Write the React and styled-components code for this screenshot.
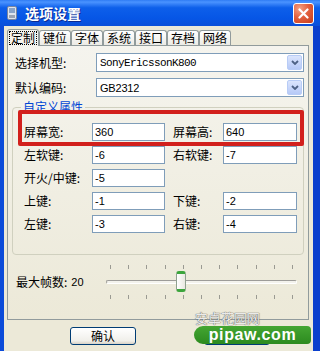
import React from "react";
import styled, { createGlobalStyle } from "styled-components";

const GlobalStyle = createGlobalStyle`
  html, body {
    margin: 0;
    padding: 0;
    background: #ece9d8;
  }
  body {
    font-family: "Noto Sans CJK SC", "Noto Sans", sans-serif;
    font-size: 12px;
    color: #000;
  }
  * {
    box-sizing: border-box;
  }
`;

const Window = styled.div`
  position: relative;
  width: 320px;
  height: 351px;
  display: flex;
  flex-direction: column;
  overflow: hidden;
  background: #ece9d8;
`;

const TitleBar = styled.div`
  flex: none;
  height: 26px;
  display: flex;
  align-items: center;
  gap: 8px;
  padding: 0 6px 0 7px;
  background: linear-gradient(180deg, #2f7cf4 0%, #4a93ff 8%, #0d5fea 30%, #0656e6 70%, #0a4fd9 100%);
`;

const Title = styled.span`
  flex: 1;
  color: #fff;
  font-size: 14px;
  font-weight: bold;
  line-height: 16px;
  text-shadow: 1px 1px 0 #0c2a8f;
`;

const CloseButton = styled.div`
  width: 21px;
  height: 21px;
  border: 1px solid #fff;
  border-radius: 3px;
  background: radial-gradient(circle at 30% 25%, #f3a084 0%, #e2603e 45%, #c63c1b 100%);
  display: flex;
  align-items: center;
  justify-content: center;
`;

const Frame = styled.div`
  flex: 1;
  display: flex;
  flex-direction: column;
  padding: 3px 4px 0 3px;
  border-left: 4px solid #0b4bd9;
  border-right: 7px solid #0a3fcd;
  background: #ece9d8;
`;

const TabRow = styled.div`
  position: relative;
  z-index: 1;
  height: 16px;
  display: flex;
  align-items: flex-end;
`;

const Tab = styled.div`
  width: 32px;
  height: ${(p) => (p.$active ? 17 : 15)}px;
  margin-bottom: ${(p) => (p.$active ? -1 : 0)}px;
  display: flex;
  align-items: center;
  justify-content: center;
  border: 1px solid #919b9c;
  border-bottom: none;
  border-radius: 3px 3px 0 0;
  background: ${(p) => (p.$active ? "#f5f4ee" : "linear-gradient(#ffffff, #ecebe5)")};
  font-size: 12px;
  line-height: 12px;
`;

const Focus = styled.span`
  outline: 1px dotted #000;
  outline-offset: 0;
  padding: 0 1px;
`;

const TabPage = styled.div`
  height: 275px;
  display: flex;
  flex-direction: column;
  padding: 7px 4px 0 4px;
  border: 1px solid #919b9c;
  background: linear-gradient(180deg, #f5f4ee, #ece9d8);
`;

const FieldRow = styled.div`
  height: 19px;
  display: flex;
  align-items: center;
  padding-left: 3px;
  & + & {
    margin-top: 6px;
  }
`;

const FieldLabel = styled.span`
  flex: none;
  width: 81px;
  line-height: 14px;
`;

const Select = styled.div`
  flex: 1;
  height: 19px;
  display: flex;
  align-items: center;
  justify-content: space-between;
  padding: 0 1px 0 3px;
  border: 1px solid #7f9db9;
  background: #fff;
`;

const SelectValue = styled.span`
  font-family: ${(p) => (p.$mono ? '"Liberation Mono", monospace' : '"Liberation Sans", sans-serif')};
  font-size: 11px;
  letter-spacing: ${(p) => (p.$mono ? "-0.6px" : "-0.2px")};
`;

const DropButton = styled.div`
  width: 15px;
  height: 15px;
  display: flex;
  align-items: center;
  justify-content: center;
  border: 1px solid #b8ccf6;
  border-radius: 2px;
  background: linear-gradient(#dbe5fd, #b6c9f7);
`;

const Group = styled.fieldset`
  margin: 3px 0 0 0;
  padding: 9px 6px 21px 11px;
  min-width: 0;
  border: 1px solid #d0d0bf;
  border-radius: 4px;
`;

const Legend = styled.legend`
  margin-left: -3px;
  padding: 0 2px;
  color: #0046d5;
  font-size: 12px;
  line-height: 14px;
`;

const KeyGrid = styled.div`
  display: grid;
  grid-template-columns: 60px 73px 42px 74px;
  grid-auto-rows: 18px;
  column-gap: 8px;
  row-gap: 5px;
  align-items: center;
`;

const KeyLabel = styled.span`
  white-space: nowrap;
  line-height: 14px;
`;

const TextBox = styled.div`
  height: 18px;
  display: flex;
  align-items: center;
  padding-left: 2px;
  border: 1px solid #7f9db9;
  background: #fff;
  font-family: "Liberation Sans", sans-serif;
  font-size: 11px;
`;

const SliderRow = styled.div`
  height: 34px;
  margin-top: 10px;
  display: flex;
  align-items: center;
  padding-left: 4px;
`;

const SliderLabel = styled.span`
  line-height: 14px;
`;

const SliderValue = styled.span`
  margin-left: 4px;
  font-family: "Liberation Sans", sans-serif;
  font-size: 11px;
`;

const Slider = styled.div`
  position: relative;
  width: 191px;
  height: 34px;
  margin: 0 7px 0 auto;
  display: flex;
  flex-direction: column;
  justify-content: space-between;
`;

const TickRow = styled.div`
  height: 4px;
  display: flex;
  justify-content: space-between;
  padding: 0 4px;
`;

const Tick = styled.div`
  width: 1px;
  height: 4px;
  background: #9a9a92;
`;

const Track = styled.div`
  height: 4px;
  border-radius: 2px;
  border: 1px solid;
  border-color: #9d9c99 #ffffff #ffffff #9d9c99;
  background: #f3f2ec;
`;

const Thumb = styled.div`
  position: absolute;
  top: 6px;
  width: 10px;
  height: 21px;
  border: 1px solid #8fa08f;
  border-top: 3px solid #3ca53c;
  border-bottom: 3px solid #3ca53c;
  border-radius: 3px;
  background: linear-gradient(90deg, #ffffff, #e9e8e1);
`;

const ButtonRow = styled.div`
  display: flex;
  gap: 68px;
  margin-top: 7px;
  padding-left: 63px;
`;

const Button = styled.div`
  width: 66px;
  height: 18px;
  display: flex;
  align-items: center;
  justify-content: center;
  border: 1px solid #003c74;
  border-radius: 3px;
  background: linear-gradient(#ffffff, #f0efea 80%, #d8d2c6);
  line-height: 14px;
`;

const Highlight = styled.div`
  position: absolute;
  left: 18px;
  top: 110px;
  width: 286px;
  height: 36px;
  border: 4px solid #d2201c;
  border-radius: 2px;
`;

const Watermark = styled.div`
  position: absolute;
  left: 194px;
  top: 311px;
  width: 117px;
  display: flex;
  flex-direction: column;
  gap: 1px;
`;

const WatermarkCn = styled.span`
  height: 14px;
  padding-left: 1px;
  color: rgba(255, 255, 255, 0.9);
  font-size: 13px;
  line-height: 14px;
  text-shadow: 0 0 1px #555, 0 0 1px #555;
`;

const WatermarkBand = styled.div`
  height: 18px;
  display: flex;
  align-items: center;
  justify-content: center;
  border-radius: 9px 4px 4px 9px;
  background: linear-gradient(#44a632, #2c8a1f);
  color: #fff;
  font-family: "Liberation Sans", sans-serif;
  font-weight: bold;
  font-size: 16px;
  line-height: 18px;
  letter-spacing: 0.6px;
`;

const AppIcon = () => (
  <svg width="10" height="14" viewBox="0 0 10 14">
    <rect x="0.5" y="0.5" width="9" height="13" rx="1.5" fill="#dfe4ee" stroke="#7a869e" />
    <rect x="2" y="2" width="6" height="5" fill="#8aa4c8" />
    <rect x="2" y="9" width="6" height="3" fill="#9aa3b3" />
  </svg>
);

const CloseIcon = () => (
  <svg width="11" height="11" viewBox="0 0 11 11">
    <path d="M1.5 1.5 L9.5 9.5 M9.5 1.5 L1.5 9.5" stroke="#fff" strokeWidth="2.2" strokeLinecap="round" />
  </svg>
);

const Chevron = () => (
  <svg width="8" height="5" viewBox="0 0 8 5">
    <path d="M1 1 L4 4 L7 1" fill="none" stroke="#4d6185" strokeWidth="1.8" />
  </svg>
);

const tabs = ["定制", "键位", "字体", "系统", "接口", "存档", "网络"];

const keys = [
  ["屏幕宽:", "360", "屏幕高:", "640"],
  ["左软键:", "-6", "右软键:", "-7"],
  ["开火/中键:", "-5", null, null],
  ["上键:", "-1", "下键:", "-2"],
  ["左键:", "-3", "右键:", "-4"],
];

const frameRate = { value: 20, min: 1, max: 50 };

export default function App() {
  const thumbLeft = 4 + ((frameRate.value - frameRate.min) / (frameRate.max - frameRate.min)) * 183 - 5;

  return (
    <Window>
      <GlobalStyle />
      <TitleBar>
        <AppIcon />
        <Title>选项设置</Title>
        <CloseButton>
          <CloseIcon />
        </CloseButton>
      </TitleBar>
      <Frame>
        <TabRow>
          {tabs.map((t, i) => (
            <Tab key={t} $active={i === 0}>
              {i === 0 ? <Focus>{t}</Focus> : t}
            </Tab>
          ))}
        </TabRow>
        <TabPage>
          <FieldRow>
            <FieldLabel>选择机型:</FieldLabel>
            <Select>
              <SelectValue $mono>SonyEricssonK800</SelectValue>
              <DropButton>
                <Chevron />
              </DropButton>
            </Select>
          </FieldRow>
          <FieldRow>
            <FieldLabel>默认编码:</FieldLabel>
            <Select>
              <SelectValue>GB2312</SelectValue>
              <DropButton>
                <Chevron />
              </DropButton>
            </Select>
          </FieldRow>
          <Group>
            <Legend>自定义属性</Legend>
            <KeyGrid>
              {keys.map((row, i) => (
                <React.Fragment key={i}>
                  <KeyLabel>{row[0]}</KeyLabel>
                  <TextBox>{row[1]}</TextBox>
                  {row[2] ? <KeyLabel>{row[2]}</KeyLabel> : <span />}
                  {row[3] ? <TextBox>{row[3]}</TextBox> : <span />}
                </React.Fragment>
              ))}
            </KeyGrid>
          </Group>
          <SliderRow>
            <SliderLabel>最大帧数:</SliderLabel>
            <SliderValue>{frameRate.value}</SliderValue>
            <Slider>
              <TickRow>
                {Array.from({ length: 11 }).map((_, i) => (
                  <Tick key={i} />
                ))}
              </TickRow>
              <Track />
              <TickRow>
                {Array.from({ length: 11 }).map((_, i) => (
                  <Tick key={i} />
                ))}
              </TickRow>
              <Thumb style={{ left: thumbLeft }} />
            </Slider>
          </SliderRow>
        </TabPage>
        <ButtonRow>
          <Button>确认</Button>
          <Button />
        </ButtonRow>
      </Frame>
      <Highlight />
      <Watermark>
        <WatermarkCn>安卓花园网</WatermarkCn>
        <WatermarkBand>pipaw.com</WatermarkBand>
      </Watermark>
    </Window>
  );
}
